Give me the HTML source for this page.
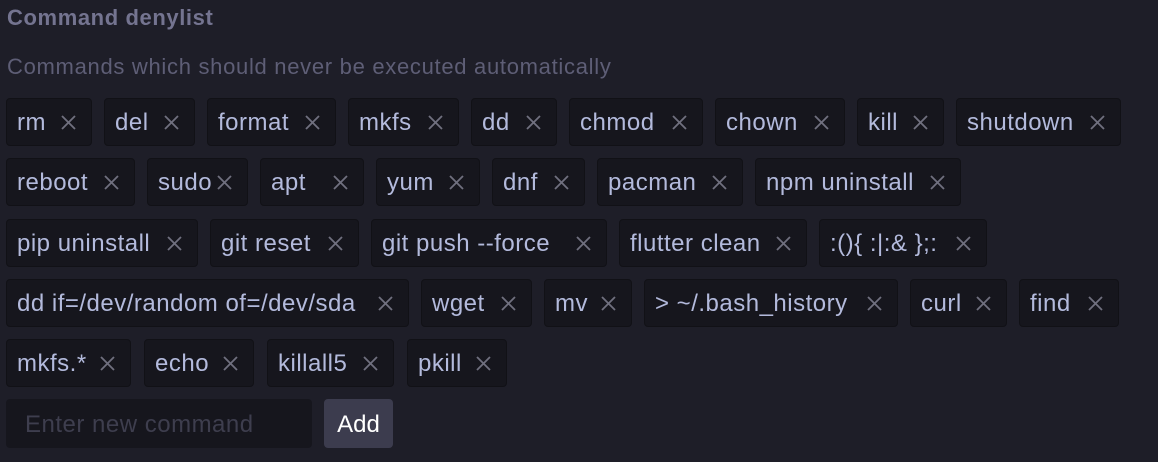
<!DOCTYPE html>
<html><head><meta charset="utf-8"><style>
html,body{margin:0;padding:0;}
body{width:1158px;height:462px;background:#1e1e28;font-family:"Liberation Sans",sans-serif;position:relative;overflow:hidden;}
.t{position:absolute;left:7px;top:5px;font-size:22px;color:#747490;font-weight:bold;letter-spacing:0.6px;}
.d{position:absolute;left:7px;top:54px;font-size:22px;color:#5e5e76;letter-spacing:0.7px;}
.c{position:absolute;background:#16161d;border:1px solid #111116;border-radius:4px;box-sizing:border-box;height:48px;}
.c span{position:absolute;left:10px;top:10px;font-size:24px;color:#b3badc;white-space:nowrap;letter-spacing:0.5px;}
.c svg{position:absolute;right:15px;top:16px;}
.in{position:absolute;left:6px;top:399px;width:306px;height:49px;background:#16161d;border-radius:4px;}
.in span{position:absolute;left:19px;top:12px;font-size:24px;color:#3e3e4e;letter-spacing:0.5px;}
.add{position:absolute;left:324px;top:399px;width:69px;height:49px;background:#3c3c4e;border-radius:4px;color:#fff;font-size:24px;text-align:center;line-height:51px;}
</style></head><body>
<div class="t">Command denylist</div>
<div class="d">Commands which should never be executed automatically</div>
<div id="w"></div>
<div class="in"><span>Enter new command</span></div>
<div class="add">Add</div>
<script>
var X='<svg width="15" height="15" viewBox="0 0 15 15"><path d="M1 1L14 14M14 1L1 14" stroke="#70707f" stroke-width="1.8"/></svg>';
var rows=[[98,[["rm",6,92],["del",104,195],["format",207,336],["mkfs",348,459],["dd",471,557],["chmod",569,703],["chown",715,845],["kill",857,944],["shutdown",956,1121]]],
[158,[["reboot",6,135],["sudo",147,248],["apt",260,364],["yum",376,480],["dnf",492,585],["pacman",597,743],["npm uninstall",755,961]]],
[219,[["pip uninstall",6,198],["git reset",210,359],["git push --force",371,607],["flutter clean",619,807],[":(){ :|:& };:",819,987]]],
[279,[["dd if=/dev/random of=/dev/sda",6,409],["wget",421,532],["mv",544,632],["> ~/.bash_history",644,898],["curl",910,1007],["find",1019,1119]]],
[339,[["mkfs.*",6,131],["echo",144,254],["killall5",267,394],["pkill",407,507]]]];
var h='';
rows.forEach(function(r){r[1].forEach(function(c){
var t=c[0].replace(/&/g,'&amp;').replace(/>/g,'&gt;');
h+='<div class="c" style="left:'+c[1]+'px;top:'+r[0]+'px;width:'+(c[2]-c[1])+'px"><span>'+t+'</span>'+X+'</div>';});});
document.getElementById('w').innerHTML=h;
</script>
</body></html>
